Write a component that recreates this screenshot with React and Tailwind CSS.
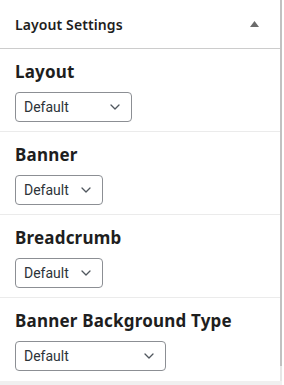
const sections = [
  { label: 'Layout', width: 'w-[117px]' },
  { label: 'Banner', width: 'w-[88px]' },
  { label: 'Breadcrumb', width: 'w-[88px]' },
  { label: 'Banner Background Type', width: 'w-[151px]' },
]

function SelectBox({ width }) {
  return (
    <div
      className={`${width} h-[30px] flex items-center justify-between pl-[8px] pr-[11px] border border-[#8c8f94] rounded-[4px] bg-white`}
    >
      <span className="text-[14px] text-[#2c3338] font-['Roboto',sans-serif]">Default</span>
      <svg width="10" height="6" viewBox="0 0 10 6" fill="none" stroke="#50575e" strokeWidth="1.3">
        <path d="M1 1l4 4 4-4" strokeLinecap="round" strokeLinejoin="round" />
      </svg>
    </div>
  )
}

export default function App() {
  return (
    <div className="w-[284px] h-[385px] bg-white flex flex-col overflow-hidden font-['Noto_Sans',sans-serif]">
      <div className="flex flex-1 min-h-0">
        <div className="w-[280px] flex flex-col">
          <div className="h-[49px] flex items-center justify-between pl-[15px] pr-[21px] border-b border-[#cccccc]">
            <span className="text-[14px] font-semibold text-[#1e1e1e] tracking-[0.1px]">Layout Settings</span>
            <svg width="9" height="6" viewBox="0 0 9 6">
              <path d="M4.5 0L9 6H0z" fill="#6b6b6b" />
            </svg>
          </div>
          {sections.map((s, i) => (
            <div
              key={s.label}
              className={`pl-[15px] pt-[11px] pb-[9px] ${i < sections.length - 1 ? 'border-b border-[#ebebeb]' : ''}`}
            >
              <div className="text-[17px] leading-[24px] font-bold text-[#1e1e1e] tracking-[0.2px] mb-[8px]">{s.label}</div>
              <SelectBox width={s.width} />
            </div>
          ))}
        </div>
        <div className="w-[2px] flex flex-col bg-[#e6e6e6]">
          <div className="h-[366px] bg-[#c1c1c1]" />
        </div>
        <div className="w-[2px]" />
      </div>
      <div className="h-[4px] w-[282px] bg-[#f0f0f0]" />
    </div>
  )
}
